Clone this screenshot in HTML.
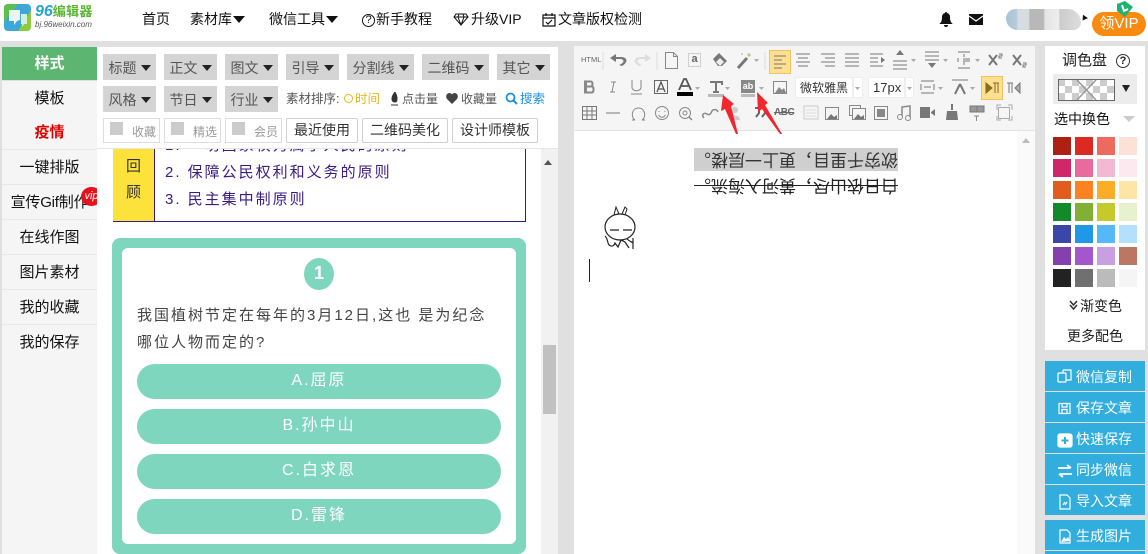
<!DOCTYPE html>
<html lang="zh"><head><meta charset="utf-8"><title>96编辑器</title>
<style>
html,body{margin:0;padding:0}
body{width:1148px;height:554px;overflow:hidden;position:relative;background:#e0e0e0;font-family:"Liberation Sans","Noto Sans CJK SC",sans-serif;color:#222;font-size:14px}
.a{position:absolute;white-space:nowrap}
.c{text-align:center}
.nav{top:9px;height:20px;line-height:20px;font-size:14px;color:#111}
.tri{display:inline-block;width:0;height:0;border-left:6px solid transparent;border-right:6px solid transparent;border-top:7px solid #111;vertical-align:1px;margin-left:1px}
.side{left:2px;width:95px;height:34px;line-height:36px;text-align:center;background:#f5f5f5;border-bottom:1px solid #e8e8e8;color:#111;font-size:15px}
.g{height:26px;line-height:28px;background:#d4d4d4;color:#555;text-align:center;font-size:14px}
.g i{display:inline-block;width:0;height:0;border-left:5px solid transparent;border-right:5px solid transparent;border-top:6px solid #222;vertical-align:2px;margin-left:4px}
.o{top:118px;height:23px;line-height:23px;border:1px solid #d0d0d0;border-radius:2px;background:#fff;text-align:center;color:#333;font-size:14px}
.ck{top:118px;height:23px;border:1px solid #ddd;background:#fff;font-size:12px;color:#999;line-height:26px}
.ck b{position:absolute;left:6px;top:3px;width:13px;height:13px;background:#ccc}
.ck span{position:absolute;right:3px;top:0}
.opt{left:137px;width:364px;height:35px;line-height:33px;border-radius:18px;background:#7ed6bf;color:#fff;text-align:center;font-size:16px;letter-spacing:2px}
.bl{left:1045px;width:100px;background:#32aede;color:#fff;font-size:14px}
.bl span{position:absolute;left:31px;top:0;line-height:33px}
.sw{width:18px;height:18px}
.pl{left:165px;font-size:15px;line-height:19px;color:#3b1a86;letter-spacing:2px}
</style></head><body>
<!-- header -->
<div class="a" style="left:0;top:0;width:1148px;height:41px;background:#fff"></div>
<svg class="a" style="left:4px;top:4px" width="27" height="27" viewBox="0 0 27 27"><rect width="27" height="27" rx="4" fill="#3ca7d8"/><path d="M0 4a4 4 0 0 1 4-4h10L0 18z" fill="#5cc04e"/><path d="M14 27h9a4 4 0 0 0 4-4V6z" fill="#8ccb3f"/><path d="M5 6h11v10l-3 1-3 4v-4H5z" fill="#eaf5f0"/><path d="M17 10h6v10h-3l-2 3v-3h-1z" fill="#d6f0d8"/></svg>
<div class="a" style="left:35px;top:3px;font-size:15px;font-weight:bold;line-height:18px"><span style="color:#29a3d8;font-style:italic;font-size:16px">96</span><span style="color:#5cb531;letter-spacing:.3px;font-size:13px">编辑器</span></div>
<div class="a" style="left:35px;top:19px;font-size:8px;line-height:12px;font-style:italic;color:#555">bj.96weixin.com</div>
<div class="a nav" style="left:142px">首页</div>
<div class="a nav" style="left:190px">素材库<i class="tri"></i></div>
<div class="a nav" style="left:269px">微信工具<i class="tri"></i></div>
<div class="a nav" style="left:362px"><span style="font-size:11px;display:inline-block;width:11px;height:11px;line-height:11px;border:1px solid #111;border-radius:50%;text-align:center;vertical-align:1px;margin-right:1px">?</span>新手教程</div>
<svg class="a" style="left:453px;top:13px" width="16" height="13" viewBox="0 0 16 13"><path d="M3 1h10l2 3-7 8-7-8zM1 4h14M5 4l3 8 3-8M5 4l1-3M11 4l-1-3" fill="none" stroke="#111"/></svg>
<div class="a nav" style="left:471px">升级VIP</div>
<svg class="a" style="left:542px;top:12px" width="14" height="15" viewBox="0 0 14 15"><path d="M1 3h12v11H1zM1 6h12M4 1v3M10 1v3M4 10l2 2 4-4" fill="none" stroke="#111" stroke-width="1.2"/></svg>
<div class="a nav" style="left:558px">文章版权检测</div>
<svg class="a" style="left:939px;top:12px" width="14" height="15" viewBox="0 0 14 15"><path d="M7 0c1 0 1 1 1 1 2 .5 3 2 3 4 0 4 1 6 3 7H0c2-1 3-3 3-7 0-2 1-3.500 3-4 0 0 0-1 1-1zM5 13h4a2 2 0 0 1-4 0z" fill="#111"/></svg>
<svg class="a" style="left:969px;top:14px" width="14" height="11" viewBox="0 0 14 11"><rect width="14" height="11" fill="#111"/><path d="M0 2l7 5 7-5" fill="none" stroke="#fff" stroke-width="1.2"/></svg>
<div class="a" style="left:1006px;top:9px;width:75px;height:21px;border-radius:10px 14px 8px 12px;background:linear-gradient(90deg,#a8c2d8 0,#b8cad8 14%,#d5dde2 16%,#d5dde2 30%,#b8b8b8 32%,#b8b8b8 50%,#e4e4e4 52%,#eee 70%,#ccc 72%,#ddd 100%)"></div>
<div class="a" style="left:1081px;top:16px;width:0;height:0;border-left:3px solid transparent;border-right:3px solid transparent;border-top:5px solid #111;transform:rotate(35deg)"></div>
<div class="a" style="left:1092px;top:12px;width:54px;height:24px;border-radius:12px;background:#f98a10;color:#fff;font-size:15px;line-height:24px;text-align:center">领VIP</div>
<svg class="a" style="left:1114px;top:1px" width="20" height="18" viewBox="0 0 20 18"><path d="M3 3l8-3 8 6-8 10-8-6z" fill="#1fb371"/><path d="M8 4l2 6 4-2" fill="none" stroke="#fff" stroke-width="2"/></svg>

<!-- sidebar -->
<div class="a side" style="top:47px;height:33px;line-height:34px;background:#5cb571;color:#fff;font-weight:bold;border:0">样式</div>
<div class="a side" style="top:81px">模板</div>
<div class="a side" style="top:115px;color:#e00000;font-weight:bold">疫情</div>
<div class="a side" style="top:150px">一键排版</div>
<div class="a side" style="top:185px;letter-spacing:-.2px">宣传Gif制作</div>
<div class="a side" style="top:220px">在线作图</div>
<div class="a side" style="top:255px">图片素材</div>
<div class="a side" style="top:290px">我的收藏</div>
<div class="a side" style="top:325px;height:229px;border:0">我的保存</div>
<div class="a c" style="left:81px;top:187px;width:21px;height:19px;line-height:18px;border-radius:50%;background:#e8101a;color:#fff;font-size:11px;font-style:italic">vip</div>

<!-- material panel -->
<div class="a" style="left:97px;top:47px;width:461px;height:507px;background:#fff"></div>
<!-- scrolled content -->
<div class="a" style="left:113px;top:149px;width:411px;height:72px;border:1px solid #3b1a86;border-top:0"></div>
<div class="a" style="left:113px;top:149px;width:41px;height:72px;background:#fde23c;border-right:1px solid #3b1a86"></div>
<div class="a c" style="left:113px;top:154px;width:41px;font-size:15px;line-height:26px;color:#333;white-space:normal">回<br>顾</div>
<div class="a pl" style="top:136px">1. 一切国家权力属于人民的原则</div>
<div class="a pl" style="top:163px">2. 保障公民权利和义务的原则</div>
<div class="a pl" style="top:190px">3. 民主集中制原则</div>
<div class="a" style="left:112px;top:238px;width:414px;height:316px;border-radius:8px;background:#7ed6bf"></div>
<div class="a" style="left:122px;top:248px;width:394px;height:296px;border-radius:6px;background:#fff"></div>
<div class="a c" style="left:304px;top:258px;width:30px;height:32px;line-height:31px;border-radius:50%;background:#7ed6bf;color:#fff;font-weight:bold;font-size:18px">1</div>
<div class="a" style="left:137px;top:302px;font-size:15px;line-height:27px;color:#444;letter-spacing:2px">我国植树节定在每年的3月12日,这也 是为纪念<br>哪位人物而定的?</div>
<div class="a opt" style="top:364px">A.屈原</div>
<div class="a opt" style="top:409px">B.孙中山</div>
<div class="a opt" style="top:454px">C.白求恩</div>
<div class="a opt" style="top:499px">D.雷锋</div>
<!-- scrollbar -->
<div class="a" style="left:541px;top:149px;width:17px;height:405px;background:#f1f1f1"></div>
<div class="a" style="left:544px;top:160px;width:0;height:0;border-left:4px solid transparent;border-right:4px solid transparent;border-bottom:5px solid #555"></div>
<div class="a" style="left:543px;top:345px;width:13px;height:69px;background:#c1c1c1"></div>
<!-- filter toolbar -->
<div class="a" style="left:97px;top:47px;width:461px;height:102px;background:#fff;border-bottom:1px solid #e6e6e6;box-sizing:border-box"></div>
<div class="a g" style="left:103px;top:54px;width:53px">标题<i></i></div>
<div class="a g" style="left:164px;top:54px;width:53px">正文<i></i></div>
<div class="a g" style="left:225px;top:54px;width:53px">图文<i></i></div>
<div class="a g" style="left:286px;top:54px;width:53px">引导<i></i></div>
<div class="a g" style="left:347px;top:54px;width:67px">分割线<i></i></div>
<div class="a g" style="left:422px;top:54px;width:67px">二维码<i></i></div>
<div class="a g" style="left:497px;top:54px;width:53px">其它<i></i></div>
<div class="a g" style="left:103px;top:86px;width:53px">风格<i></i></div>
<div class="a g" style="left:164px;top:86px;width:53px">节日<i></i></div>
<div class="a g" style="left:225px;top:86px;width:53px">行业<i></i></div>
<div class="a" style="left:286px;top:90px;font-size:12.500px;line-height:18px;color:#555">素材排序:</div>
<div class="a" style="left:344px;top:90px;font-size:12.500px;line-height:18px;color:#e8b820"><span style="display:inline-block;width:7px;height:7px;border:1.500px solid #e8b820;border-radius:50%;margin-right:2px"></span>时间</div>
<svg class="a" style="left:390px;top:92px" width="9" height="14" viewBox="0 0 9 14"><path d="M5 0C3 3 2 4 2 7c0 2 1 3 3 3s2-2 2-4C7 4 6 2 5 0zM1 13h7" fill="#333" stroke="#333"/></svg>
<div class="a" style="left:402px;top:90px;font-size:12px;line-height:18px;color:#555">点击量</div>
<svg class="a" style="left:446px;top:93px" width="12" height="11" viewBox="0 0 12 11"><path d="M6 11L1 6C-1 3 1 0 3.500 0 5 0 6 1.500 6 1.500S7 0 8.500 0C11 0 13 3 11 6z" fill="#444"/></svg>
<div class="a" style="left:461px;top:90px;font-size:12px;line-height:18px;color:#555">收藏量</div>
<svg class="a" style="left:505px;top:92px" width="13" height="13" viewBox="0 0 13 13"><circle cx="5.500" cy="5.500" r="4" fill="none" stroke="#1d8fe0" stroke-width="1.800"/><path d="M8.500 8.500l3.500 3.500" stroke="#1d8fe0" stroke-width="2"/></svg>
<div class="a" style="left:520px;top:90px;font-size:12.500px;line-height:18px;color:#1d8fe0">搜索</div>
<div class="a ck" style="left:103px;width:55px"><b></b><span>收藏</span></div>
<div class="a ck" style="left:164px;width:55px"><b></b><span>精选</span></div>
<div class="a ck" style="left:225px;width:55px"><b></b><span>会员</span></div>
<div class="a o" style="left:286px;width:70px">最近使用</div>
<div class="a o" style="left:362px;width:84px">二维码美化</div>
<div class="a o" style="left:452px;width:84px">设计师模板</div>

<!-- editor -->
<div class="a" style="left:574px;top:46px;width:461px;height:508px;background:#fff"></div>
<div class="a" style="left:574px;top:46px;width:461px;height:84px;background:#f5f5f5;border-bottom:1px solid #e2e2e2"></div>
<div class="a" style="left:1017px;top:131px;width:18px;height:423px;background:#fafafa"></div>
<div class="a" style="left:1022px;top:138px;width:0;height:0;border-left:4px solid transparent;border-right:4px solid transparent;border-bottom:5px solid #bbb"></div>
<div class="a" style="left:770px;top:51px;width:20px;height:22px;background:#ffdf90;outline:1px solid #f1c460"></div>
<div class="a" style="left:982px;top:77px;width:20px;height:22px;background:#ffdf90;outline:1px solid #f1c460"></div>
<div class="a" style="left:795px;top:77px;width:68px;height:21px;line-height:20px;background:#fff;font-size:12px;color:#333;border:1px solid #eee;box-sizing:border-box;text-indent:4px">微软雅黑</div>
<div class="a" style="left:868px;top:77px;width:46px;height:21px;line-height:20px;background:#fff;font-size:13px;color:#333;border:1px solid #eee;box-sizing:border-box;text-indent:4px">17px</div>
<div class="a" style="left:581px;top:55px;font-size:7.500px;line-height:10px;color:#666">HTML</div>
<svg class="a" style="left:574px;top:46px" width="461" height="84" viewBox="574 46 461 84" fill="none" stroke="#777" stroke-width="1">
<path d="M603 52v18M657 52v18M765 52v18M853 78v19M905 78v19" stroke="#ddd"/>
<path d="M855 87h5l-2.500 3zM907 87h5l-2.500 3z" fill="#aaa" stroke="none"/>
<path d="M618 65c5-2 6-5 2-6h-5v3l-6-4 6-4v3h5c6 0 8 5 1 9z" transform="translate(1,0)" fill="#777" stroke="none"/>
<path d="M642 65c-5-2-6-5-2-6h5v3l6-4-6-4v3h-5c-6 0-8 5-1 9z" fill="#ddd" stroke="none"/>
<path d="M665.500 52.500h8l4 4v12h-12zM673.500 52.500v4h4" stroke="#888"/>
<rect x="688.500" y="53.500" width="12" height="13" stroke="#aaa" stroke-dasharray="1 1"/>
<path d="M713 59l6-6 8 8-5 5h-4z" fill="#777" stroke="none"/><path d="M716 62l4-4 4 4-4 4z" fill="#eee" stroke="none"/>
<path d="M738 68l9-10" stroke="#777" stroke-width="3"/><path d="M749 53v4M747 55h4M742 53v2" stroke="#c4b080"/>
<path d="M754 59h5l-2.500 3z" fill="#aaa" stroke="none"/>
<g stroke="#777"><path d="M774 56h12M774 60h8M774 64h12M774 68h8"/>
<path d="M796 54h14M798 58h10M796 62h14M798 66h10"/>
<path d="M821 54h14M825 58h10M821 62h14M825 66h10"/>
<path d="M845 54h14M845 58h14M845 62h14M845 66h14"/>
<path d="M870 54h13M870 58h8M870 62h8M870 66h13"/><path d="M881 57l4 3-4 3z" fill="#777" stroke="none"/>
<path d="M893 61h14M893 65h14M893 69h14"/><path d="M900 50l4 5h-8z" fill="#777" stroke="none"/>
<path d="M925 52h14M925 56h14M925 60h14"/><path d="M932 68l4-5h-8z" fill="#777" stroke="none"/>
<path d="M958 52h12M958 68h12M964 54v3M964 62v3M958 58v4M963 59h7M963 61h7"/></g>
<path d="M911 59h5l-2.500 3zM943 59h5l-2.500 3zM975 59h5l-2.500 3zM725 87h5l-2.500 3zM759 87h5l-2.500 3zM695 87h5l-2.500 3zM938 87h5l-2.500 3zM970 87h5l-2.500 3z" fill="#aaa" stroke="none"/>
<path d="M989 55l8 10M997 55l-8 10" stroke="#777" stroke-width="2"/><path d="M999 54h3v2h-3v2h3" stroke="#777"/>
<path d="M1013 55l8 10M1021 55l-8 10" stroke="#777" stroke-width="2"/><path d="M1023 63h3v2h-3v2h3" stroke="#777"/>
<path d="M585 81.500h6c2 0 2 5 0 5h-6zM585 86.500h7c2 0 2 6 0 6h-7zM586 81v11" stroke="#888" stroke-width="2"/>
<path d="M610 92h5M612 92l2-10M611 82h5" stroke="#888"/>
<path d="M632 80v7c0 5 9 5 9 0v-7M631 94h11" stroke="#888"/>
<rect x="654.500" y="80.500" width="13" height="13" stroke="#666"/><path d="M657 92l4-10 4 10M658 89h6" stroke="#555" stroke-width="1.300"/>
<path d="M679 90l5-11h2l5 11M681 86h8" stroke="#555" stroke-width="1.800"/><rect x="677" y="92" width="16" height="4" fill="#000" stroke="none"/>
<path d="M710 82h12v3M716 82v10M713 92h6" stroke="#777" stroke-width="2"/><rect x="708" y="94" width="16" height="3" fill="#bbb" stroke="none"/>
<rect x="741" y="80" width="14" height="13" fill="#888" stroke="none"/><rect x="741" y="94" width="14" height="3" fill="#bbb" stroke="none"/>
<rect x="773.500" y="81.500" width="13" height="12" stroke="#888"/><path d="M775 93l4-6 3 3 2-2 2 5z" fill="#888" stroke="none"/>
<path d="M921 81h13M921 93h13M921 84v6M934 84v6M924 87h7"/><path d="M960 84l-5 10M960 84l5 10" stroke="#777" stroke-width="2"/><path d="M952 80h16" />
<path d="M986 83l6 5-6 5zM993 83h6M995 83v10M998 83v10" stroke="#8a6a20" fill="#8a6a20"/>
<path d="M1020 83l-5 5 5 5zM1007 83h6M1009 83v10M1012 83v10" stroke="#777" fill="#aaa"/>
<path d="M582.500 106.500h14v13h-14zM582.500 111h14M582.500 115h14M587 106.500v13M592 106.500v13" stroke="#777"/>
<path d="M606 113h14" stroke="#777"/>
<path d="M632 120h3c-4-2-4-12 3.500-12s7.500 10 3.500 12h3" stroke="#888"/>
<circle cx="662" cy="113" r="6.500" stroke="#888"/><path d="M659 111v1M665 111v1M658.500 115c2 3 5 3 7 0" stroke="#888"/>
<circle cx="685" cy="113" r="5.500" stroke="#888"/><circle cx="685" cy="113" r="2" stroke="#888"/><path d="M689 117l3 3" stroke="#888" stroke-width="1.500"/>
<path d="M704 118c-3-3 0-6 3-4s4-1 5-3 5-2 6 1" stroke="#888" stroke-width="1.500"/>
<circle cx="735" cy="110" r="3" fill="#ccc" stroke="none"/><path d="M730 120c0-6 10-6 10 0z" fill="#ccc" stroke="none"/>
<path d="M755 108h4v5l-3 4M761 108h4v5l-3 4" stroke="#666" stroke-width="2"/>
<rect x="804" y="106" width="14" height="13" stroke="#ccc"/><path d="M806 110h10M806 113h10M806 116h10" stroke="#ddd"/>
<rect x="825.500" y="107.500" width="13" height="12" stroke="#888"/><path d="M827 119l4-5 3 3 3-2v4z" fill="#777" stroke="none"/>
<rect x="849.500" y="105.500" width="11" height="10" stroke="#888"/><rect x="852.500" y="108.500" width="13" height="11" fill="#f5f5f5" stroke="#888"/><path d="M854 119l4-5 3 3 3-2v4z" fill="#777" stroke="none"/>
<rect x="874.500" y="106.500" width="13" height="13" stroke="#888"/><rect x="877" y="109" width="8" height="8" fill="#888" stroke="none"/>
<path d="M902 116v-9l8-1v11" stroke="#888" stroke-width="1.500"/><circle cx="900" cy="117" r="2.500" stroke="#888"/><circle cx="908" cy="118" r="2.500" stroke="#888"/>
<rect x="920" y="107" width="10" height="11" fill="#777" stroke="none"/><path d="M931 112l4-3v7l-4-3z" fill="#777" stroke="none"/>
<path d="M952 104v6" stroke="#777" stroke-width="2"/><path d="M947 111h10l1 9h-12z" fill="#777" stroke="none"/>
<path d="M970 106h14v6h-14zM977 106v6" fill="#999" stroke="#777"/><path d="M974 116h5M976.500 116v5" stroke="#888"/>
<rect x="998.500" y="107.500" width="11" height="11" stroke="#aaa"/><path d="M997 110v-5h4M1008 105h4v5M1012 116v4h-4M1001 120h-4v-4" stroke="#aaa"/>
</svg>
<div class="a" style="left:688px;top:53px;width:13px;font-size:11px;line-height:13px;color:#666;text-align:center;font-weight:bold">a</div>
<div class="a" style="left:741px;top:81px;width:14px;font-size:9px;line-height:11px;color:#fff;text-align:center;font-weight:bold">ab</div>
<div class="a" style="left:774px;top:106px;font-size:10px;line-height:14px;color:#666;font-weight:bold;letter-spacing:-.5px;text-decoration:line-through">ABC</div>

<!-- rotated poem -->
<div class="a" style="left:694px;top:148px;width:204px;height:23px;background:#cfcfcf;transform:rotate(180deg);font-size:17px;line-height:23px;color:#333;letter-spacing:0">欲穷千里目，更上一层楼。</div>
<div class="a" style="left:694px;top:174px;width:204px;height:22px;transform:rotate(180deg);font-size:17px;line-height:22px;color:#222;text-decoration:line-through">白日依山尽，黄河入海流。</div>
<!-- rabbit -->
<svg class="a" style="left:600px;top:204px" width="38" height="46" viewBox="0 0 38 46" fill="none" stroke="#222"><ellipse cx="20" cy="23" rx="15" ry="13" stroke-width="1.200"/><path d="M14 11l2-8 3 7M22 10l3-7 2 2-2 6"/><path d="M10 26h9M23 26h9" stroke-width="1.300"/><path d="M5 32c3 3 2 6 4 9 3 2 5 1 6-2l3 4 3-7 4 2 4 6M27 35c2 2 5 3 6 4M33 34v11" stroke-width="1.200"/></svg>
<div class="a" style="left:589px;top:259px;width:1px;height:23px;background:#222"></div>

<!-- red arrows -->
<svg class="a" style="left:715px;top:88px" width="72" height="48" viewBox="715 88 72 48"><path d="M723 95l11 9-3 2 7 28-2 0-11-25-4 2z" fill="#f0282d"/><path d="M757 92l11 11-3 2 17 29-2 0-18-25-4 3z" fill="#f0282d"/></svg>

<!-- palette -->
<div class="a" style="left:1045px;top:46px;width:100px;height:304px;background:#fff"></div>
<div class="a" style="left:1062px;top:51px;font-size:15px;line-height:20px;color:#222">调色盘</div>
<div class="a c" style="left:1116px;top:54px;width:12px;height:12px;border:1px solid #333;border-radius:50%;font-size:11px;line-height:12px;font-weight:bold">?</div>
<div class="a" style="left:1053px;top:74px;width:84px;height:30px;background:#ececec"></div>
<svg class="a" style="left:1058px;top:79px" width="57" height="22" viewBox="0 0 57 22"><defs><pattern id="k" width="14" height="14" patternUnits="userSpaceOnUse"><rect width="14" height="14" fill="#fff"/><rect width="7" height="7" fill="#ccc"/><rect x="7" y="7" width="7" height="7" fill="#ccc"/></pattern></defs><rect x=".5" y=".5" width="56" height="21" fill="url(#k)" stroke="#666"/><path d="M19 1l19 20M38 1L19 21" stroke="#999" stroke-width="1.500"/></svg>
<div class="a" style="left:1122px;top:85px;width:0;height:0;border-left:4.500px solid transparent;border-right:4.500px solid transparent;border-top:7px solid #222"></div>
<div class="a" style="left:1054px;top:109px;font-size:14px;line-height:20px;color:#111">选中换色</div>
<div class="a" style="left:1123px;top:116px;width:0;height:0;border-left:6px solid transparent;border-right:6px solid transparent;border-top:6px solid #ccc"></div>
<div class="a sw" style="left:1053px;top:137px;background:#ae1f14"></div><div class="a sw" style="left:1075px;top:137px;background:#dc2a22"></div><div class="a sw" style="left:1097px;top:137px;background:#ee6a5e"></div><div class="a sw" style="left:1119px;top:137px;background:#fde0d6"></div>
<div class="a sw" style="left:1053px;top:159px;background:#d0266a"></div><div class="a sw" style="left:1075px;top:159px;background:#ea6a9d"></div><div class="a sw" style="left:1097px;top:159px;background:#f3b8d2"></div><div class="a sw" style="left:1119px;top:159px;background:#fde8f0"></div>
<div class="a sw" style="left:1053px;top:181px;background:#e25c1e"></div><div class="a sw" style="left:1075px;top:181px;background:#fb8220"></div><div class="a sw" style="left:1097px;top:181px;background:#fbad27"></div><div class="a sw" style="left:1119px;top:181px;background:#fee5a5"></div>
<div class="a sw" style="left:1053px;top:203px;background:#128a2a"></div><div class="a sw" style="left:1075px;top:203px;background:#82b034"></div><div class="a sw" style="left:1097px;top:203px;background:#c5c92c"></div><div class="a sw" style="left:1119px;top:203px;background:#e6f2ce"></div>
<div class="a sw" style="left:1053px;top:225px;background:#3a46a8"></div><div class="a sw" style="left:1075px;top:225px;background:#2098e8"></div><div class="a sw" style="left:1097px;top:225px;background:#55b8f8"></div><div class="a sw" style="left:1119px;top:225px;background:#b2e0fe"></div>
<div class="a sw" style="left:1053px;top:247px;background:#8440ae"></div><div class="a sw" style="left:1075px;top:247px;background:#a456cc"></div><div class="a sw" style="left:1097px;top:247px;background:#c8a0e2"></div><div class="a sw" style="left:1119px;top:247px;background:#bc7664"></div>
<div class="a sw" style="left:1053px;top:269px;background:#222"></div><div class="a sw" style="left:1075px;top:269px;background:#707070"></div><div class="a sw" style="left:1097px;top:269px;background:#bbb"></div><div class="a sw" style="left:1119px;top:269px;background:#f5f5f5"></div>
<svg class="a" style="left:1069px;top:300px" width="9" height="11" viewBox="0 0 9 11" fill="none" stroke="#333" stroke-width="1.500"><path d="M1 1l3.500 4L8 1M1 5l3.500 4L8 5"/></svg>
<div class="a" style="left:1080px;top:296px;font-size:14px;line-height:20px;color:#222">渐变色</div>
<div class="a" style="left:1067px;top:326px;font-size:14px;line-height:20px;color:#222">更多配色</div>

<!-- blue buttons -->
<div class="a bl" style="top:361px;height:30px"><span>微信复制</span></div>
<div class="a bl" style="top:392px;height:30px"><span>保存文章</span></div>
<div class="a bl" style="top:423px;height:30px"><span>快速保存</span></div>
<div class="a bl" style="top:454px;height:30px"><span>同步微信</span></div>
<div class="a bl" style="top:485px;height:30px"><span>导入文章</span></div>
<div class="a bl" style="top:520px;height:30px"><span>生成图片</span></div>
<div class="a bl" style="top:551px;height:3px"></div>
<svg class="a" style="left:1057px;top:366px" width="18" height="180" viewBox="0 0 18 180" fill="none" stroke="#fff" stroke-width="1.200">
<rect x="1" y="7" width="8" height="9" rx="1"/><path d="M6 4h8v10h-5M6 4v3"/>
<path d="M2 37.500h11v10H2zM5 37.500v3.500h5v-3.500M5 47.500v-4h5v4"/>
<rect x="1" y="68" width="14" height="13" rx="2" fill="#fff"/><path d="M8 71v7M4.500 74.500h7" stroke="#32aede" stroke-width="2"/>
<path d="M1 102h12M10 99l4 3M15 108H3M6 111l-4-3" stroke-width="1.800"/>
<path d="M3 129h7l3 3v11H3zM6 139l2-3M8 139l2-3"/>
<path d="M3 164h7l3 3v10H3z"/><path d="M4 176l3-5 2 2 2-2 2 4z" fill="#fff" stroke="none"/>
</svg>
</body></html>
